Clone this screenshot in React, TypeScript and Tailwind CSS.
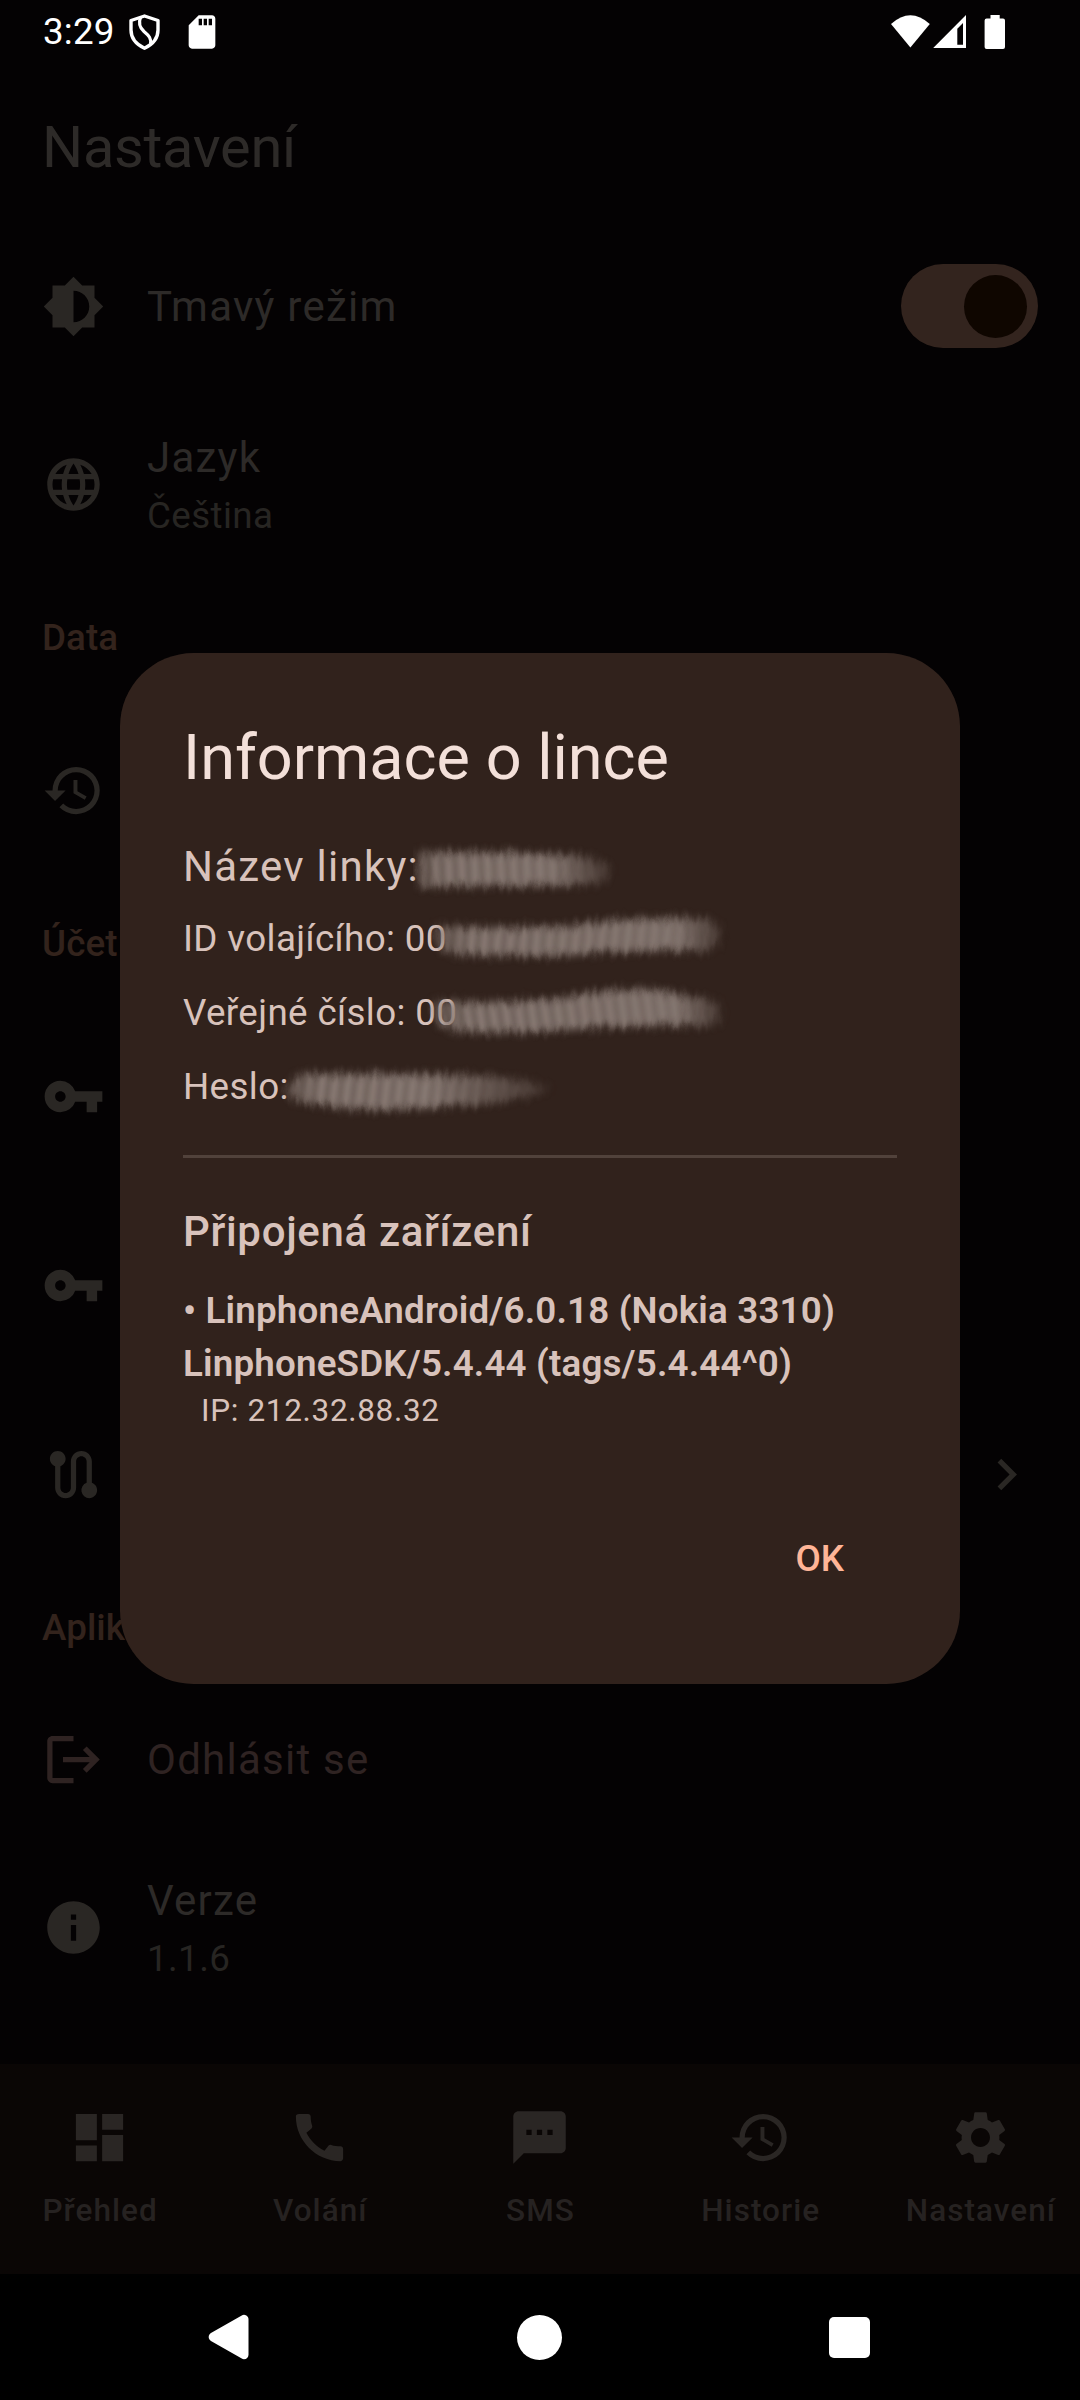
import type { ReactNode } from "react";
import type { IconType } from "react-icons";
import {
  MdBrightness6,
  MdCall,
  MdChevronRight,
  MdDashboard,
  MdHistory,
  MdInfo,
  MdLanguage,
  MdLogout,
  MdRoute,
  MdSdCard,
  MdSettings,
  MdTextsms,
  MdVpnKey,
} from "react-icons/md";

const bodyLarge = "text-[42px] leading-[63px] tracking-[1.25px]";
const bodyMedium = "text-[36.75px] leading-[52.5px] tracking-[0.38px]";

function StatusBar() {
  return (
    <div className="flex h-[63px] items-center justify-between pl-[43px] pr-[75px] text-white">
      <div className="flex h-full items-center">
        <span className="w-[86px] text-[36.75px] leading-[63px] tracking-[0.2px]">3:29</span>
        <svg width="31" height="36" viewBox="0 0 31 36" fill="none" stroke="white" strokeWidth="3.4" strokeLinejoin="round">
          <path d="M15.5 2 29 6.5V16c0 8.5-5.500 14.500-13.500 18.200C7.500 30.500 2 24.500 2 16V6.500Z" />
          <path d="M11.500 3.500c-2.200 5.500-1.500 9.500 3.500 14 5 4.200 7.500 7 6.500 12.500" strokeWidth="3.200" />
        </svg>
        <MdSdCard className="ml-[22px] size-[40px]" />
      </div>
      <svg width="115" height="36" viewBox="890 13 115 36" fill="white">
        <path d="M891 23Q910.400 5.500 929.800 23L910.400 46.500Z" />
        <path fillRule="evenodd" d="M966 14V47H933.200ZM963 22 957.300 27.700V43.700H963Z" />
        <path d="M990.500 14h9.200v3.500h3.300q2 0 2 2V46q0 2-2 2H986.600q-2 0-2-2V19.500q0-2 2-2h3.900Z" />
      </svg>
    </div>
  );
}

type RowProps = {
  icon: IconType;
  height: string;
  title?: string;
  subtitle?: string;
  danger?: boolean;
  trailing?: ReactNode;
};

function Row({ icon: Icon, height, title, subtitle, danger, trailing }: RowProps) {
  return (
    <div className={`flex items-center px-[42px] ${height}`}>
      <Icon className={`size-[63px] shrink-0 ${danger ? "text-[#2f2322]" : "text-[#2a2724]"}`} />
      <div className="ml-[42px] flex-1">
        {title && <div className={`${bodyLarge} ${danger ? "text-[#2f2322]" : "text-[#2d2a28]"}`}>{title}</div>}
        {subtitle && <div className={`${bodyMedium} pt-[1px] text-[#272522]`}>{subtitle}</div>}
      </div>
      {trailing}
    </div>
  );
}

function Section({ height, children }: { height: string; children: ReactNode }) {
  return (
    <div
      className={`flex items-center px-[42px] pt-[2px] text-[36.75px] font-medium leading-[52.5px] tracking-[0.1px] text-[#33231c] ${height}`}
    >
      {children}
    </div>
  );
}

function Switch() {
  return (
    <div className="flex h-[84px] w-[137px] items-center justify-end rounded-full bg-[#33241e] pr-[11px]">
      <div className="size-[63px] rounded-full bg-[#0f0600]" />
    </div>
  );
}

const tabs: { icon: IconType; label: string }[] = [
  { icon: MdDashboard, label: "Přehled" },
  { icon: MdCall, label: "Volání" },
  { icon: MdTextsms, label: "SMS" },
  { icon: MdHistory, label: "Historie" },
  { icon: MdSettings, label: "Nastavení" },
];

function TabBar() {
  return (
    <div className="grid h-[210px] grid-cols-5 gap-[21px] bg-[#0a0605]">
      {tabs.map(({ icon: Icon, label }) => (
        <div key={label} className="flex flex-col items-center pt-[42px]">
          <Icon className="size-[63px] text-[#2a2624]" />
          <span className="mt-[21px] pl-[1px] text-[31.5px] font-medium leading-[42px] tracking-[1.05px] text-[#262221]">{label}</span>
        </div>
      ))}
    </div>
  );
}

function SystemNav() {
  return (
    <div className="flex h-[126px] items-center bg-black pl-[208px]">
      <svg width="42" height="46" viewBox="0 0 42 46" fill="white" stroke="white" strokeWidth="9" strokeLinejoin="round">
        <path d="M5.200 23 36 5.300V40.700Z" />
      </svg>
      <div className="ml-[267px] size-[45px] rounded-full bg-white" />
      <div className="ml-[267px] size-[41px] rounded-[5px] bg-white" />
    </div>
  );
}

type SmudgeProps = {
  id: string;
  className: string;
  width: number;
  shape: string;
  slant: number;
  fadeFrom: number;
};

/* A brushed-over value: a soft band with fine strokes running across it. */
function Smudge({ id, className, width, shape, slant, fadeFrom }: SmudgeProps) {
  const strokes = Array.from({ length: Math.floor(width / 13) }, (_, i) => 8 + i * 13);
  return (
    <svg className={`absolute ${className}`} width={width} height="68" viewBox={`0 0 ${width} 68`}>
      <defs>
        <filter id={`${id}-soft`} x="-10%" y="-40%" width="120%" height="180%">
          <feGaussianBlur stdDeviation="4" result="band" />
          <feTurbulence type="fractalNoise" baseFrequency="0.16 0.05" numOctaves="2" seed="4" result="noise" />
          <feDisplacementMap in="band" in2="noise" scale="8" xChannelSelector="R" yChannelSelector="G" />
        </filter>
        <filter id={`${id}-fine`}>
          <feGaussianBlur stdDeviation="1.500" />
        </filter>
        <linearGradient id={`${id}-fade`} x1="0" x2="1">
          <stop offset="0" stopColor="white" stopOpacity="0.55" />
          <stop offset="0.12" stopColor="white" stopOpacity="0.950" />
          <stop offset={fadeFrom} stopColor="white" />
          <stop offset="1" stopColor="white" stopOpacity="0.25" />
        </linearGradient>
        <mask id={`${id}-mask`}>
          <path d={shape} fill={`url(#${id}-fade)`} filter={`url(#${id}-soft)`} />
        </mask>
      </defs>
      <g mask={`url(#${id}-mask)`}>
        <rect width={width} height="68" fill="#7f716b" />
        <g filter={`url(#${id}-fine)`} strokeWidth="3" fill="none">
          {strokes.map((x, i) => (
            <g key={x} opacity={0.55 - (0.4 * i) / strokes.length}>
              <path d={`M${x} 4 Q${x + slant} 30 ${x + slant * 1.5} 60`} stroke="#9c8c84" />
              <path d={`M${x + 6.5} 4 Q${x + 6.5 + slant} 30 ${x + 6.5 + slant * 1.5} 60`} stroke="#6a5c55" />
            </g>
          ))}
        </g>
      </g>
    </svg>
  );
}

function LineInfoDialog() {
  return (
    <div className="absolute left-[120px] top-[653px] flex h-[1031px] w-[840px] flex-col rounded-[73.5px] bg-[#31221c] px-[63px] pt-[63px] text-[#d8c2bb]">
      <h2 className="text-[63px] leading-[84px] text-[#f3e0d9]">Informace o lince</h2>
      <div className={`relative mt-[35px] ${bodyLarge}`}>
        Název linky:
        <Smudge
          id="name"
          className="left-[230px] top-0"
          width={220}
          slant={2}
          fadeFrom={0.7}
          shape="M4 17 Q60 17 110 18 L170 21 Q196 27 198 35 Q196 45 180 50 L90 51 L4 52Z"
        />
      </div>
      <div className={`relative mt-[15px] ${bodyMedium}`}>
        ID volajícího: 00
        <Smudge
          id="caller"
          className="left-[246px] top-[-12px]"
          width={304}
          slant={-4}
          fadeFrom={0.85}
          shape="M6 25 Q80 28 140 25 Q200 15 275 18 Q297 22 291 36 Q284 52 272 50 Q190 49 130 55 L30 54 Q8 50 6 38Z"
        />
      </div>
      <div className={`relative mt-[21.5px] ${bodyMedium}`}>
        Veřejné číslo: 00
        <Smudge
          id="public"
          className="left-[244px] top-[-13px]"
          width={308}
          slant={6}
          fadeFrom={0.85}
          shape="M6 27 Q70 30 130 25 Q170 15 229 15 Q254 22 290 27 Q300 38 286 52 Q220 50 150 55 Q80 61 28 57 Q6 52 6 38Z"
        />
      </div>
      <div className={`relative mt-[21.5px] ${bodyMedium}`}>
        Heslo:
        <Smudge
          id="password"
          className="left-[96px] top-[-5px]"
          width={300}
          slant={-5}
          fadeFrom={0.55}
          shape="M20 18 L130 18 L210 20 Q264 26 270 33 Q250 44 200 48 Q130 55 70 53 L26 47 Q4 40 6 34Z"
        />
      </div>
      <div className="mt-[41.5px] h-[3px] shrink-0 bg-[#51423b]" />
      <h3 className="mt-[42px] text-[42px] font-medium leading-[63px] tracking-[0.67px]">Připojená zařízení</h3>
      <p className="mt-[22px] text-[36.75px] font-semibold leading-[52.5px] tracking-[0.17px]">
        • LinphoneAndroid/6.0.18 (Nokia 3310)
        <br />
        LinphoneSDK/5.4.44 (tags/5.4.44^0)
      </p>
      <p className="whitespace-pre pl-[1px] text-[31.5px] leading-[42px] tracking-[0.66px]">{"  IP: 212.32.88.32"}</p>
      <button className="mr-[53px] mt-[101px] self-end text-[36.75px] font-medium leading-[52.5px] text-[#ffb597]">
        OK
      </button>
    </div>
  );
}

export default function App() {
  return (
    <div className="relative h-[2400px] w-[1080px] overflow-hidden bg-[#040203] font-['Roboto',sans-serif]">
      <StatusBar />
      <header className="flex h-[168px] items-center px-[42px] pt-[2px] text-[57.75px] leading-[73.5px] tracking-[-0.3px] text-[#2d2a28]">
        Nastavení
      </header>
      <main className="h-[1833px]">
        <Row icon={MdBrightness6} height="h-[150px]" title="Tmavý režim" trailing={<Switch />} />
        <Row icon={MdLanguage} height="h-[206px]" title="Jazyk" subtitle="Čeština" />
        <Section height="h-[100px]">Data</Section>
        <Row icon={MdHistory} height="h-[207px]" />
        <Section height="h-[98px]">Účet</Section>
        <Row icon={MdVpnKey} height="h-[209px]" />
        <Row icon={MdVpnKey} height="h-[169px]" />
        <Row icon={MdRoute} height="h-[209px]" trailing={<MdChevronRight className="size-[63px] text-[#2a2724]" />} />
        <Section height="h-[96px]">Aplikace</Section>
        <Row icon={MdLogout} height="h-[169px]" title="Odhlásit se" danger />
        <Row icon={MdInfo} height="h-[167px]" title="Verze" subtitle="1.1.6" />
      </main>
      <TabBar />
      <SystemNav />
      <LineInfoDialog />
    </div>
  );
}
